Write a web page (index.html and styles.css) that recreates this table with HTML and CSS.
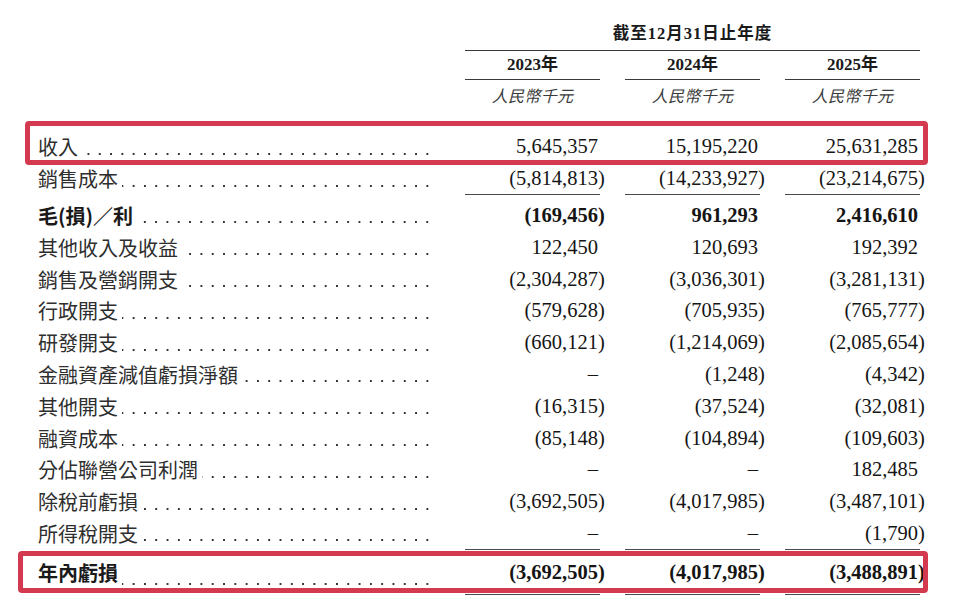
FILE: index.html
```html
<!DOCTYPE html>
<html lang="zh-Hant">
<head>
<meta charset="utf-8">
<title>截至12月31日止年度</title>
<link rel="stylesheet" href="styles.css">
</head>
<body>
<div class="sheet">
  <div class="row head-period">
    <div class="period">截至12月31日止年度</div>
  </div>
  <div class="row head-year">
    <div class="year y1">2023年</div>
    <div class="year">2024年</div>
    <div class="year">2025年</div>
  </div>
  <div class="row head-unit">
    <div class="unit y1">人民幣千元</div>
    <div class="unit">人民幣千元</div>
    <div class="unit">人民幣千元</div>
  </div>

  <div class="row first hl hl-top">
    <div class="label"><span class="txt">收入</span><span class="dots"></span></div>
    <div class="num"><span>5,645,357</span></div>
    <div class="num"><span>15,195,220</span></div>
    <div class="num"><span>25,631,285</span></div>
  </div>
  <div class="row rule-below">
    <div class="label"><span class="txt">銷售成本</span><span class="dots"></span></div>
    <div class="num"><span class="neg">(5,814,813)</span></div>
    <div class="num"><span class="neg">(14,233,927)</span></div>
    <div class="num"><span class="neg">(23,214,675)</span></div>
  </div>
  <div class="row bold after-rule">
    <div class="label"><span class="txt">毛(損)／利</span><span class="dots"></span></div>
    <div class="num"><span class="neg">(169,456)</span></div>
    <div class="num"><span>961,293</span></div>
    <div class="num"><span>2,416,610</span></div>
  </div>
  <div class="row">
    <div class="label"><span class="txt">其他收入及收益</span><span class="dots"></span></div>
    <div class="num"><span>122,450</span></div>
    <div class="num"><span>120,693</span></div>
    <div class="num"><span>192,392</span></div>
  </div>
  <div class="row">
    <div class="label"><span class="txt">銷售及營銷開支</span><span class="dots"></span></div>
    <div class="num"><span class="neg">(2,304,287)</span></div>
    <div class="num"><span class="neg">(3,036,301)</span></div>
    <div class="num"><span class="neg">(3,281,131)</span></div>
  </div>
  <div class="row">
    <div class="label"><span class="txt">行政開支</span><span class="dots"></span></div>
    <div class="num"><span class="neg">(579,628)</span></div>
    <div class="num"><span class="neg">(705,935)</span></div>
    <div class="num"><span class="neg">(765,777)</span></div>
  </div>
  <div class="row">
    <div class="label"><span class="txt">研發開支</span><span class="dots"></span></div>
    <div class="num"><span class="neg">(660,121)</span></div>
    <div class="num"><span class="neg">(1,214,069)</span></div>
    <div class="num"><span class="neg">(2,085,654)</span></div>
  </div>
  <div class="row">
    <div class="label"><span class="txt">金融資產減值虧損淨額</span><span class="dots"></span></div>
    <div class="num"><span>–</span></div>
    <div class="num"><span class="neg">(1,248)</span></div>
    <div class="num"><span class="neg">(4,342)</span></div>
  </div>
  <div class="row">
    <div class="label"><span class="txt">其他開支</span><span class="dots"></span></div>
    <div class="num"><span class="neg">(16,315)</span></div>
    <div class="num"><span class="neg">(37,524)</span></div>
    <div class="num"><span class="neg">(32,081)</span></div>
  </div>
  <div class="row">
    <div class="label"><span class="txt">融資成本</span><span class="dots"></span></div>
    <div class="num"><span class="neg">(85,148)</span></div>
    <div class="num"><span class="neg">(104,894)</span></div>
    <div class="num"><span class="neg">(109,603)</span></div>
  </div>
  <div class="row">
    <div class="label"><span class="txt">分佔聯營公司利潤</span><span class="dots"></span></div>
    <div class="num"><span>–</span></div>
    <div class="num"><span>–</span></div>
    <div class="num"><span>182,485</span></div>
  </div>
  <div class="row">
    <div class="label"><span class="txt">除稅前虧損</span><span class="dots"></span></div>
    <div class="num"><span class="neg">(3,692,505)</span></div>
    <div class="num"><span class="neg">(4,017,985)</span></div>
    <div class="num"><span class="neg">(3,487,101)</span></div>
  </div>
  <div class="row">
    <div class="label"><span class="txt">所得稅開支</span><span class="dots"></span></div>
    <div class="num"><span>–</span></div>
    <div class="num"><span>–</span></div>
    <div class="num"><span class="neg">(1,790)</span></div>
  </div>
  <div class="row bold total hl hl-bottom">
    <div class="label"><span class="txt">年內虧損</span><span class="dots"></span></div>
    <div class="num"><span class="neg">(3,692,505)</span></div>
    <div class="num"><span class="neg">(4,017,985)</span></div>
    <div class="num"><span class="neg">(3,488,891)</span></div>
  </div>
</div>
</body>
</html>
```

FILE: styles.css
```css
html, body {
  margin: 0;
  background: #ffffff;
}

.sheet {
  padding: 22px 0 0 38px;
  width: 882px;
  color: #1a1a1a;
  font-family: "Liberation Serif", "Noto Sans CJK TC", serif;
}

.row {
  display: grid;
  grid-template-columns: 402px 135px 135px 135px;
  column-gap: 25px;
  position: relative;
  height: 31.8px;
}

/* header */
.head-period {
  height: auto;
}
.period {
  grid-column: 2 / span 3;
  text-align: center;
  font-weight: 700;
  font-size: 16.5px;
  letter-spacing: 1px;
  line-height: 24px;
  padding-bottom: 4px;
  border-bottom: 1.5px solid #3a3a3a;
  color: #1a1a1a;
}
.head-year {
  height: auto;
}
.year {
  text-align: center;
  font-weight: 700;
  font-size: 17px;
  line-height: 27px;
  padding-bottom: 1px;
  border-bottom: 1.5px solid #3a3a3a;
}
.y1 {
  grid-column: 2;
}
.head-unit {
  height: auto;
}
.unit {
  text-align: center;
  font-family: "Noto Sans CJK TC", sans-serif;
  font-style: italic;
  font-size: 16px;
  line-height: 30px;
  color: #3a3a3a;
  letter-spacing: 0.3px;
}

/* body rows */
.first {
  margin-top: 21px;
}
.after-rule {
  margin-top: 5px;
}

.label {
  display: flex;
  align-items: center;
  padding-right: 7px;
  font-family: "Noto Sans CJK TC", sans-serif;
  font-size: 20px;
  color: #2e2e2e;
}
.txt {
  white-space: nowrap;
}
.dots {
  flex: 1;
  align-self: stretch;
  margin-left: 4px;
  background-image: radial-gradient(circle, #333 0, #333 1px, rgba(0,0,0,0) 1.4px);
  background-size: 11.3px 4px;
  background-repeat: repeat-x;
  background-position: right bottom 7px;
}

.num {
  display: flex;
  align-items: center;
  justify-content: flex-end;
  padding-right: 2px;
  font-size: 20.5px;
  color: #151515;
}
.neg {
  margin-right: -0.333em;
}

.bold .txt {
  font-weight: 700;
  color: #1a1a1a;
}
.bold .num {
  font-weight: 700;
}

.rule-below .num {
  border-bottom: 1.5px solid #4a4a4a;
}

.total {
  height: 46px;
}
.total .num {
  border-top: 1.5px solid #4a4a4a;
  border-bottom: 1.5px solid #4a4a4a;
}
.total .dots {
  background-position: right bottom 9px;
}

/* red highlight frames */
.hl::after {
  content: "";
  position: absolute;
  border: 5px solid #d3394f;
  border-radius: 4px;
  pointer-events: none;
}
.hl-top::after {
  top: -10px;
  bottom: -2px;
  left: -13px;
  right: -8px;
}
.hl-bottom::after {
  top: 2px;
  bottom: 2px;
  left: -20px;
  right: -8px;
}
```
